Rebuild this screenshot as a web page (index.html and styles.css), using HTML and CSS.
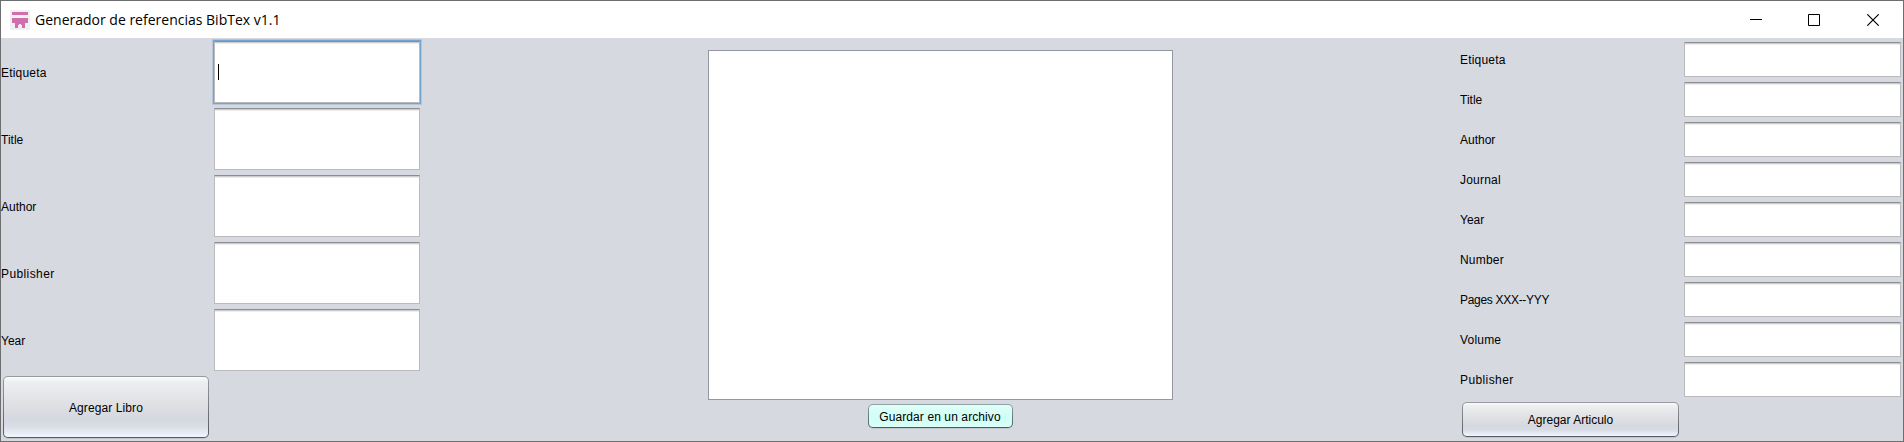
FILE: index.html
```html
<!DOCTYPE html>
<html lang="es">
<head>
<meta charset="utf-8">
<title>Generador de referencias BibTex v1.1</title>
<link rel="stylesheet" href="styles.css">
</head>
<body>
<div class="window">
  <header class="titlebar">
    <svg class="app-icon" width="20" height="20" viewBox="0 0 20 20" shape-rendering="crispEdges">
      <rect width="20" height="20" fill="#f0f0f0"/>
      <path fill="#d26eae" d="M2 2h16v3H2zM2 8h16v5h-3v5h-3v-3h-1v-1H9v1H8v3H5v-5H2z"/>
    </svg>
    <h1 class="title">Generador de referencias BibTex v1.1</h1>
    <svg class="controls" width="130" height="12" viewBox="0 0 130 12" fill="none" stroke="#000">
      <path d="M0 5.5h12M58.5.5h11v11h-11z"/>
      <path d="M117.3.3l11.4 11.4M128.7.3l-11.4 11.4" stroke-width="1.1"/>
    </svg>
  </header>
  <main class="content">
    <form class="form book">
      <label class="loose">Etiqueta</label><div class="field focused"><span class="caret"></span></div>
      <label>Title</label><div class="field"></div>
      <label>Author</label><div class="field"></div>
      <label class="wide">Publisher</label><div class="field"></div>
      <label>Year</label><div class="field"></div>
      <button type="button" class="btn add-book">Agregar Libro</button>
    </form>
    <section class="output">
      <div class="textarea"></div>
      <button type="button" class="btn save">Guardar en un archivo</button>
    </section>
    <form class="form article">
      <label class="loose">Etiqueta</label><div class="field"></div>
      <label>Title</label><div class="field"></div>
      <label>Author</label><div class="field"></div>
      <label class="loose">Journal</label><div class="field"></div>
      <label>Year</label><div class="field"></div>
      <label class="loose">Number</label><div class="field"></div>
      <label class="narrow">Pages XXX--YYY</label><div class="field"></div>
      <label class="loose">Volume</label><div class="field"></div>
      <label class="wide">Publisher</label><div class="field"></div>
      <button type="button" class="btn add-article">Agregar Articulo</button>
    </form>
  </main>
</div>
</body>
</html>
```
FILE: styles.css
```css
* { box-sizing: border-box; }

body {
  margin: 0;
  overflow: hidden;
  font: 12px/14px "Liberation Sans", Arial, sans-serif;
  color: #000;
}

.window {
  display: flex;
  flex-direction: column;
  height: 442px;
  border: 1px solid #6e6d70;
  background: #d6d9e0;
}

.titlebar {
  display: flex;
  align-items: center;
  flex: 0 0 37px;
  padding: 0 23px 0 9px;
  background: #fff;
}

.title {
  margin: 0 auto 0 5px;
  font: 400 14px/20px "Open Sans", "Noto Sans", sans-serif;
  white-space: nowrap;
}

.content {
  display: flex;
  justify-content: space-between;
  flex: 1;
}

.form { display: grid; align-content: start; }

.book {
  grid-template-columns: 206px 206px;
  grid-auto-rows: 62px;
  gap: 5px;
  padding: 3px 0 0 2px;
}

.article {
  grid-template-columns: 217px 217px;
  grid-auto-rows: 35px;
  gap: 5px;
  padding: 4px 2px 0 0;
}

label { align-self: center; margin: 1px 0 0 -2px; white-space: nowrap; }
.loose { letter-spacing: .2px; }
.wide { letter-spacing: .4px; }
.narrow { letter-spacing: -.3px; }

.field {
  display: flex;
  align-items: center;
  border: 1px solid #bbb;
  border-top-color: #8d8e91;
  background: linear-gradient(#cdcdcf 0 1px, #ededed 1px 2px, #fff 2px);
}

.focused { box-shadow: 0 0 0 1px #73a4d1, 0 0 0 2px #b2c7de; }

.caret { width: 1px; height: 16px; margin-left: 3px; background: #000; }

.btn {
  padding: 0;
  border: 1px solid transparent;
  border-radius: 5px;
  background:
    linear-gradient(#fbfbfc, #eeeff1 8%, #e3e4e7 35%, #d5d8df 70%, #d8dce5 82%, #f1f5fd) padding-box,
    linear-gradient(#999ba1, #555960) border-box;
  box-shadow: 0 1px 0 #c3c6cd;
  font: inherit;
  color: #000;
}

.add-book { padding-top: 2px; letter-spacing: .1px; }

.output {
  display: flex;
  flex-direction: column;
  align-items: center;
  gap: 4px;
  margin-right: 2px;
  padding-top: 12px;
}

.textarea {
  width: 465px;
  height: 350px;
  border: 1px solid #9297a1;
  background: #fff;
}

.save {
  width: 145px;
  height: 24px;
  padding-top: 2px;
  background:
    linear-gradient(#e2fff9, #d2fff5 40%, #d2fff5 75%, #dcfffa) padding-box,
    linear-gradient(#90a5a5, #4a5c60) border-box;
  letter-spacing: .1px;
}
```
